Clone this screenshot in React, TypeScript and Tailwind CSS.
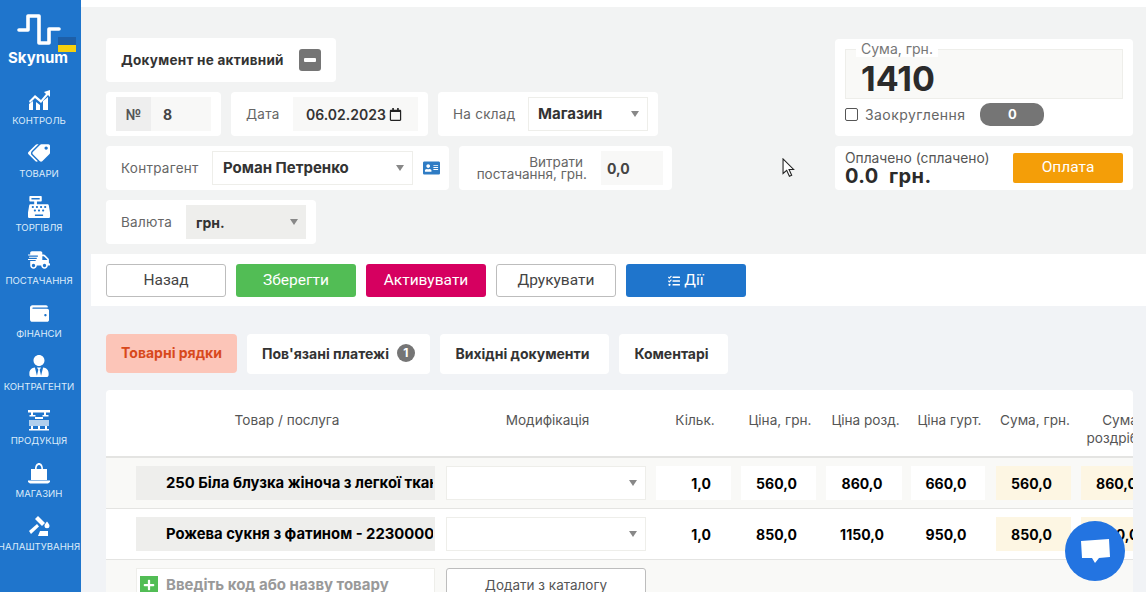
import * as React from "react";
import {
  FaAddressCard,
  FaCashRegister,
  FaPlus,
  FaRegCalendar,
  FaShippingFast,
  FaTags,
  FaTasks,
  FaUserTie,
  FaWallet,
} from "react-icons/fa";

function ChartIcon({ className }: { className?: string }) {
  return (
    <svg viewBox="0 0 22 22" className={className} fill="currentColor">
      <path d="M1 21v-6l4-3v9zM8 21v-8l4 3v5zM15 21v-9l5-4v13z" />
      <path d="M1 12l6-6 6 5 5-6-2-2 6-2v7l-2-2-7 8-6-5-5 5z" />
    </svg>
  );
}

function ProductionIcon({ className }: { className?: string }) {
  return (
    <svg viewBox="0 0 22 22" className={className} fill="currentColor">
      <path d="M0 1h22v2.5H0zM3 3.500h2V6H3zM16 3.500h2V6h-2zM1.500 6h6v1.500h-6zM14.500 6h6v1.500h-6z" />
      <path d="M7 8h8v2H7z" />
      <path d="M1 11h20v6H1z" fillOpacity="0.65" />
      <path d="M3 17h2v3H3zM10 17h2v3h-2zM17 17h2v3h-2zM1 20h20v1.500H1z" />
    </svg>
  );
}

function ShopIcon({ className }: { className?: string }) {
  return (
    <svg viewBox="0 0 22 22" className={className} fill="currentColor">
      <path d="M3 7h16v11H3zM7 7c0-8 8-8 8 0h-1.600c0-5.500-4.800-5.500-4.800 0z" fillRule="evenodd" />
      <path d="M0 18.500h22V20l-2 1.500H2L0 20z" />
    </svg>
  );
}

function HammerIcon({ className }: { className?: string }) {
  return (
    <svg viewBox="0 0 22 22" className={className} fill="currentColor">
      <path d="M1 16l8-7 2 2.500-8 7.500z" />
      <path d="M7 4l3-3 7 7-3 3z" />
      <path d="M19 6.500c1.500 2 2.500 3 2.500 4.200a2.500 2.500 0 0 1-5 0c0-1.200 1-2.200 2.500-4.200z" />
      <path d="M10 21l2-5h8v5z" />
    </svg>
  );
}

const iconFull = "mt-[11px] h-[22px] w-[22px]";
const iconSmall = "mb-px mt-[13px] h-[19px] w-[19px]";

const menu = [
  { label: "КОНТРОЛЬ", icon: ChartIcon, size: iconFull },
  { label: "ТОВАРИ", icon: FaTags, size: `${iconFull} -scale-x-100` },
  { label: "ТОРГІВЛЯ", icon: FaCashRegister, size: iconFull },
  { label: "ПОСТАЧАННЯ", icon: FaShippingFast, size: iconFull },
  { label: "ФІНАНСИ", icon: FaWallet, size: iconSmall },
  { label: "КОНТРАГЕНТИ", icon: FaUserTie, size: iconFull },
  { label: "ПРОДУКЦІЯ", icon: ProductionIcon, size: iconFull },
  { label: "МАГАЗИН", icon: ShopIcon, size: iconFull },
  { label: "НАЛАШТУВАННЯ", icon: HammerIcon, size: iconFull },
];

const rows = [
  { name: "250 Біла блузка жіноча з легкої тканини", qty: "1,0", price: "560,0", retail: "860,0", bulk: "660,0", sum: "560,0", sumRetail: "860,0", bg: "bg-[#f9f9f7]" },
  { name: "Рожева сукня з фатином - 2230000", qty: "1,0", price: "850,0", retail: "1150,0", bulk: "950,0", sum: "850,0", sumRetail: "1150,0", bg: "bg-white" },
];

function Caret() {
  return <span className="h-0 w-0 border-x-[4px] border-t-[6px] border-x-transparent border-t-[#888]" />;
}

function Card({ className, children }: { className?: string; children: React.ReactNode }) {
  return <div className={`flex h-11 items-center rounded-[4px] bg-white ${className ?? ""}`}>{children}</div>;
}

function Cell({ children, tint, end }: { children: React.ReactNode; tint?: boolean; end?: boolean }) {
  return (
    <div className={`flex h-[34px] items-center text-[14px] font-bold text-black ${end ? "justify-end pr-5" : "justify-center pr-1"} ${tint ? "bg-[#fdf6e3]" : "bg-white"}`}>
      {children}
    </div>
  );
}

function Sidebar() {
  return (
    <aside className="flex h-[592px] w-[81px] shrink-0 flex-col items-center overflow-hidden bg-[#1f75cc] text-white">
      <div className="relative h-[78px] w-full">
        <svg viewBox="0 0 44 31" className="absolute left-[17px] top-[14px] h-[31px] w-[44px]" fill="none" stroke="#fff" strokeWidth="3.6" strokeLinecap="round" strokeLinejoin="round">
          <path d="M2 16H11V2H22V29H32V15H42" />
        </svg>
        <div className="absolute left-[58px] top-[37px] flex h-[15px] w-[18px] flex-col">
          <span className="h-1/2 bg-[#1d5fa8]" />
          <span className="h-1/2 bg-[#f5d00f]" />
        </div>
        <span className="absolute left-[8px] top-[49px] text-[15px] font-bold leading-[18px]">Skynum</span>
      </div>
      <nav className="flex w-full flex-col items-center pr-[3px]">
        {menu.map(({ label, icon: Icon, size }) => (
          <div key={label} className="flex h-[53.25px] w-full flex-col items-center">
            <Icon className={size} />
            <span className="mt-[3px] whitespace-nowrap text-[9.6px] leading-[14px] text-[#dcebfa]">{label}</span>
          </div>
        ))}
      </nav>
    </aside>
  );
}

function DocumentForm() {
  const label = "text-[13.5px] tracking-[0.02em] text-[#666]";
  return (
    <div className="flex flex-col gap-2.5">
      <Card className="w-[230px] pl-[15px]">
        <span className="mt-px text-[13.5px] font-bold tracking-[0.02em] text-[#333]">Документ не активний</span>
        <span className="ml-[15px] flex h-[22px] w-[22px] items-center justify-center rounded-[3px] bg-[#757575]">
          <span className="h-1 w-3 rounded-[1px] bg-white" />
        </span>
      </Card>
      <div className="flex gap-2.5">
        <Card className="w-[115px] pl-[10px]">
          <span className="flex h-[34px] w-[35px] items-center justify-center bg-[#eeeeee] text-[14px] font-bold text-[#555]">№</span>
          <span className="flex h-[34px] w-[60px] items-center bg-[#f8f8f7] pl-3 text-[14px] font-bold text-[#444]">8</span>
        </Card>
        <Card className="w-[197px] pl-[15px]">
          <span className={`w-[47px] ${label}`}>Дата</span>
          <span className="flex h-[34px] w-[125px] items-center gap-[3px] bg-[#f8f8f7] pl-[13px] text-[14px] font-semibold text-[#333]">
            06.02.2023
            <FaRegCalendar className="h-[13px] w-[13px] text-[#222]" />
          </span>
        </Card>
        <Card className="w-[220px] pl-[15px]">
          <span className={`w-[75px] ${label}`}>На склад</span>
          <span className="flex h-[34px] w-[120px] items-center justify-between border border-[#eeeeea] pl-[9px] pr-2 text-[15px] font-bold text-[#333]">
            Магазин
            <Caret />
          </span>
        </Card>
      </div>
      <div className="flex gap-2.5">
        <Card className="w-[343px] pl-[15px]">
          <span className={`w-[91px] ${label}`}>Контрагент</span>
          <span className="flex h-[34px] w-[201px] items-center justify-between border border-[#eeeeea] pl-[10px] pr-2 text-[15px] font-bold text-[#333]">
            Роман Петренко
            <Caret />
          </span>
          <FaAddressCard className="ml-[10px] h-[18px] w-[17px] text-[#2f7cc4]" />
        </Card>
        <Card className="w-[213px]">
          <span className="w-[128px] text-right text-[13.5px] leading-[12px] text-[#666]">
            <span className="mr-[4px]">Витрати</span>
            <br />
            постачання, грн.
          </span>
          <span className="ml-[14px] flex h-[34px] w-[62px] items-center bg-[#f8f8f7] pl-[6px] text-[14px] font-bold text-[#444]">0,0</span>
        </Card>
      </div>
      <Card className="w-[210px] pl-[15px]">
        <span className={`w-[65px] ${label}`}>Валюта</span>
        <span className="flex h-[34px] w-[120px] items-center justify-between bg-[#eeeeec] pl-[10px] pr-2 text-[14px] font-bold text-[#333]">
          грн.
          <Caret />
        </span>
      </Card>
    </div>
  );
}

function Totals() {
  return (
    <div className="mt-px flex w-[298px] flex-col gap-2.5">
      <div className="h-[97px] rounded-[4px] bg-white px-[10px] pt-[10px]">
        <div className="relative h-[50px] border border-[#eeeeea] bg-[#f9f9f7]">
          <span className="absolute -top-[9px] left-[10px] bg-white px-[5px] text-[14px] leading-[16px] text-[#777]">Сума, грн.</span>
          <span className="absolute left-[15px] top-[10px] text-[34px] font-bold leading-[38px] text-[#2b2b2b]">1410</span>
        </div>
        <div className="mt-[4px] flex items-center">
          <span className="h-[13px] w-[13px] rounded-[2px] border border-[#555] bg-white" />
          <span className="ml-[7px] text-[14px] tracking-[0.03em] text-[#666]">Заокруглення</span>
          <span className="ml-[15px] flex h-[23px] w-[64px] items-center justify-center rounded-[10px] bg-[#757575] text-[13px] font-bold text-white">0</span>
        </div>
      </div>
      <Card className="justify-between px-[10px]">
        <div className="flex flex-col">
          <span className="text-[13.8px] leading-[16px] text-[#555]">Оплачено (сплачено)</span>
          <span className="text-[20px] font-bold leading-[20px] tracking-[0.02em] text-[#2b2b2b]">0.0&nbsp; грн.</span>
        </div>
        <button type="button" className="h-[30px] w-[110px] rounded-[2px] bg-[#f49e08] font-['Roboto',sans-serif] text-[15.5px] text-white">Оплата</button>
      </Card>
    </div>
  );
}

function Toolbar() {
  const base = "flex h-[33px] w-[120px] items-center justify-center gap-1 rounded-[3px] pt-px font-['Roboto',sans-serif] text-[15.5px]";
  return (
    <div className="ml-[10px] mt-2.5 flex h-[52px] items-center gap-2.5 bg-white pl-[15px]">
      <button type="button" className={`${base} border border-[#bdbdbd] text-[#444]`}>Назад</button>
      <button type="button" className={`${base} bg-[#52bd55] text-white`}>Зберегти</button>
      <button type="button" className={`${base} bg-[#d60060] text-white`}>Активувати</button>
      <button type="button" className={`${base} border border-[#bdbdbd] text-[#444]`}>Друкувати</button>
      <button type="button" className={`${base} bg-[#1f75cc] text-white`}>
        <FaTasks className="h-3 w-3" />
        Дії
      </button>
    </div>
  );
}

function Tabs() {
  const tab = "flex h-10 items-center justify-center rounded-[4px] bg-white pb-0.5 text-[14px] font-bold text-[#333]";
  return (
    <div className="ml-[25px] mt-7 flex gap-2.5">
      <div className="flex h-[39px] w-[131px] items-center justify-center rounded-[4px] bg-[#fcc5b8] pb-0.5 text-[14px] font-bold text-[#d8491c]">Товарні рядки</div>
      <div className={`${tab} w-[183px] gap-2`}>
        Пов'язані платежі
        <span className="flex h-[18px] w-[18px] items-center justify-center rounded-full bg-[#757575] text-[12px] text-white">1</span>
      </div>
      <div className={`${tab} w-[169px] pr-1`}>Вихідні документи</div>
      <div className={`${tab} w-[109px] pr-1`}>Коментарі</div>
    </div>
  );
}

const columns = "grid grid-cols-[30px_299px_11px_200px_10px_75px_10px_75px_10px_76px_9px_74px_11px_75px_10px_75px]";

function ProductTable() {
  const heading = "pl-[3px] text-center text-[13.6px] leading-[18px] text-[#555]";
  return (
    <div className="ml-[25px] mr-[13px] mt-4 h-[202px] overflow-hidden rounded-t-[4px] bg-white">
      <div className={`${columns} h-[68px] border-b-[2px] border-[#e4e4e2] pt-[21px]`}>
        <span className={`col-start-2 ${heading}`}>Товар / послуга</span>
        <span className={`col-start-4 ${heading}`}>Модифікація</span>
        <span className={`col-start-6 ${heading}`}>Кільк.</span>
        <span className={`col-start-8 ${heading}`}>Ціна, грн.</span>
        <span className={`col-start-10 ${heading}`}>Ціна розд.</span>
        <span className={`col-start-12 ${heading}`}>Ціна гурт.</span>
        <span className={`col-start-14 ${heading}`}>Сума, грн.</span>
        <span className={`col-start-16 ${heading}`}>Сума роздрібна</span>
      </div>
      {rows.map((r) => (
        <div key={r.name} className={`${columns} h-[51px] items-center border-b border-[#e4e4e2] ${r.bg}`}>
          <div className="col-start-2 flex h-[34px] items-center overflow-hidden whitespace-nowrap bg-[#eeeeec] pl-[30px] pr-[2px] text-[14.8px] font-bold text-black">
            <span className="overflow-hidden">{r.name}</span>
          </div>
          <div className="col-start-4 flex h-[34px] items-center justify-end border border-[#eeeeea] bg-white pr-2">
            <Caret />
          </div>
          <div className="col-start-6"><Cell end>{r.qty}</Cell></div>
          <div className="col-start-8"><Cell>{r.price}</Cell></div>
          <div className="col-start-10"><Cell>{r.retail}</Cell></div>
          <div className="col-start-12"><Cell>{r.bulk}</Cell></div>
          <div className="col-start-14"><Cell tint>{r.sum}</Cell></div>
          <div className="col-start-16"><Cell tint>{r.sumRetail}</Cell></div>
        </div>
      ))}
      <div className={`${columns} items-start bg-[#f9f9f7] pt-[8px]`}>
        <div className="col-start-2 flex h-[34px] items-center border border-[#eeeeea] bg-white pl-[3px]">
          <span className="flex h-[18px] w-[18px] items-center justify-center bg-[#52bd55]">
            <FaPlus className="h-3 w-3 text-white" />
          </span>
          <span className="ml-2 whitespace-nowrap text-[15px] font-bold text-[#999]">Введіть код або назву товару</span>
        </div>
        <button type="button" className="col-start-4 h-[34px] rounded-[3px] border border-[#bdbdbd] bg-white text-[13.5px] text-[#555]">Додати з каталогу</button>
      </div>
    </div>
  );
}

export default function App() {
  return (
    <div className="relative flex h-[592px] w-[1146px] overflow-hidden bg-[#f1f3f6] font-['Inter',sans-serif]">
      <Sidebar />
      <main className="min-w-0 flex-1">
        <div className="h-[7px] bg-white" />
        <div className="flex justify-between bg-[#f2f3f3] pb-2.5 pl-[25px] pr-[13px] pt-[31px]">
          <DocumentForm />
          <Totals />
        </div>
        <div className="-mt-2.5">
          <Toolbar />
        </div>
        <Tabs />
        <ProductTable />
      </main>
      <svg viewBox="0 0 14 22" className="absolute left-[782px] top-[158px] h-[20px] w-[13px]" fill="#fff" stroke="#222" strokeWidth="1.2">
        <path d="M1 1V17L5 13.5L8 20L10.5 19L7.6 12.6H12.6Z" />
      </svg>
      <div className="absolute left-[1065px] top-[521px] flex h-[60px] w-[60px] items-center justify-center rounded-full bg-[#2374e1]">
        <svg viewBox="0 0 30 26" className="h-[26px] w-[30px]" fill="#fff">
          <path d="M1 3L29 1L30 19L19 20L15 25L12 20L2 20Z" />
        </svg>
      </div>
    </div>
  );
}
